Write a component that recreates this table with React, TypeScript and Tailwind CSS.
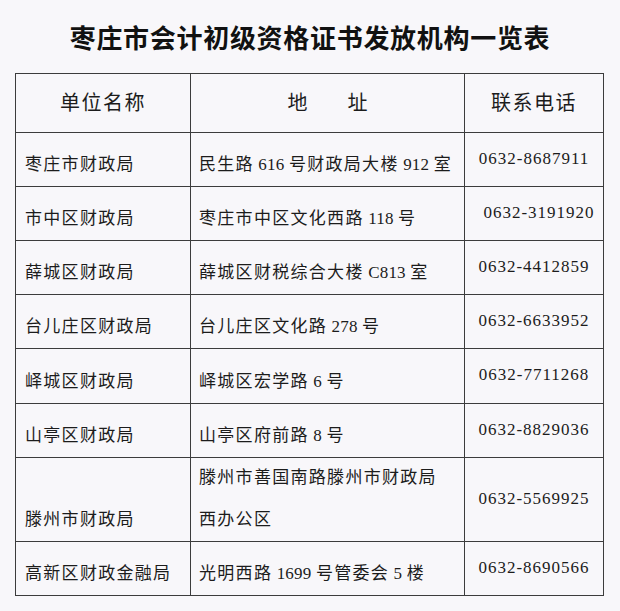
import React from "react";

// one row of the issuing-office table: name, address lines, phone
type Office = {
  name: string;
  address: string[];
  phone: string;
  h: string;
  phoneIndent?: boolean;
};

const offices: Office[] = [
  { name: "枣庄市财政局", address: ["民生路 616 号财政局大楼 912 室"], phone: "0632-8687911", h: "h-[54px]" },
  { name: "市中区财政局", address: ["枣庄市中区文化西路 118 号"], phone: "0632-3191920", h: "h-[54px]", phoneIndent: true },
  { name: "薛城区财政局", address: ["薛城区财税综合大楼 C813 室"], phone: "0632-4412859", h: "h-[54px]" },
  { name: "台儿庄区财政局", address: ["台儿庄区文化路 278 号"], phone: "0632-6633952", h: "h-[54px]" },
  { name: "峄城区财政局", address: ["峄城区宏学路 6 号"], phone: "0632-7711268", h: "h-[55px]" },
  { name: "山亭区财政局", address: ["山亭区府前路 8 号"], phone: "0632-8829036", h: "h-[54px]" },
  { name: "滕州市财政局", address: ["滕州市善国南路滕州市财政局", "西办公区"], phone: "0632-5569925", h: "h-[84px]" },
  { name: "高新区财政金融局", address: ["光明西路 1699 号管委会 5 楼"], phone: "0632-8690566", h: "h-[54px]" },
];

const cell = "border-r border-b border-[#3c3c3c]";
const bodyText = "text-[17px] leading-[20px] tracking-[1.3px] text-[#1c1c1c]";

// latin runs (numbers, room codes) are set tighter than the CJK text
const AddressLine = ({ text }: { text: string }) => {
  const parts = text.split(/( ?[A-Z0-9]+ ?)/);
  return (
    <span className="whitespace-nowrap">
      {parts.map((p, i) =>
        /[A-Z0-9]/.test(p) ? (
          <span key={i} className="tracking-[0.2px]">
            {p}
          </span>
        ) : (
          <React.Fragment key={i}>{p}</React.Fragment>
        )
      )}
    </span>
  );
};

const OfficeRow = ({ o }: { o: Office }) => {
  return (
    <>
      <div className={`${cell} ${o.h} flex items-end pl-[9px] pb-[11px] ${bodyText}`}>
        {o.name}
      </div>
      <div className={`${cell} ${o.h} flex flex-col justify-end gap-[22px] pl-[8px] pb-[11px] ${bodyText}`}>
        {o.address.map((line, i) => (
          <AddressLine key={i} text={line} />
        ))}
      </div>
      <div
        className={`${cell} ${o.h} flex items-center justify-center pb-[2px] text-[17px] leading-[20px] tracking-[1px] text-[#1c1c1c]`}
      >
        <span className={o.phoneIndent ? "ml-[10px]" : ""}>{o.phone}</span>
      </div>
    </>
  );
};

export default function App() {
  return (
    <div className="w-[620px] h-[611px] bg-[#f8f7fa] font-['Liberation_Serif','Noto_Sans_CJK_SC',serif]">
      <div className="h-[73px] pt-[24px] text-center font-['Noto_Sans_CJK_SC',sans-serif] font-bold text-[26px] leading-[26px] tracking-[0.7px] text-[#111]">
        枣庄市会计初级资格证书发放机构一览表
      </div>

      <div className="ml-[15px] w-[589px] grid grid-cols-[175px_274px_139px] border-l border-t border-[#3c3c3c]">
        {/* header */}
        <div className={`${cell} h-[59px] flex items-center justify-center text-[20px] tracking-[1.5px] text-[#1c1c1c]`}>
          单位名称
        </div>
        <div className={`${cell} h-[59px] flex items-center justify-center gap-[40px] text-[20px] text-[#1c1c1c]`}>
          <span>地</span>
          <span>址</span>
        </div>
        <div className={`${cell} h-[59px] flex items-center justify-center text-[20px] tracking-[1.5px] text-[#1c1c1c]`}>
          联系电话
        </div>

        {offices.map((o) => (
          <OfficeRow key={o.name} o={o} />
        ))}
      </div>
    </div>
  );
}
